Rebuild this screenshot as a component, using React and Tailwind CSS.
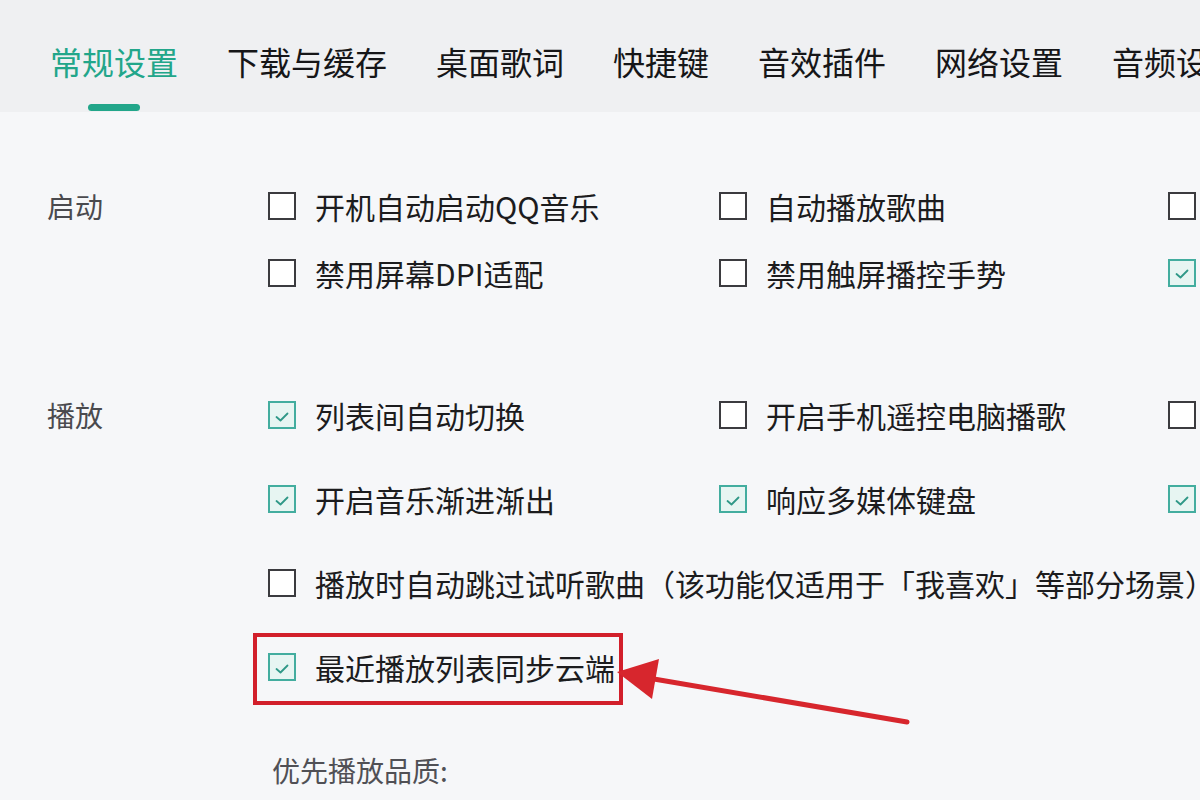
const tabs = ["常规设置", "下载与缓存", "桌面歌词", "快捷键", "音效插件", "网络设置", "音频设置"];

function Check({ on }) {
  if (on) {
    return (
      <span className="flex h-[28px] w-[28px] shrink-0 items-center justify-center border-2 border-[#43ad9f] bg-[#e7f5f2]">
        <svg width="14" height="10" viewBox="0 0 14 10" className="mt-[3px]">
          <path d="M1.5 5 L5.5 8.5 L12.5 1.5" fill="none" stroke="#2f9887" strokeWidth="1.8" strokeLinecap="round" strokeLinejoin="round" />
        </svg>
      </span>
    );
  }
  return <span className="block h-[28px] w-[28px] shrink-0 border-2 border-[#3b3b3f] bg-white" />;
}

function Option({ on, label }) {
  return (
    <div className="flex items-center gap-[19px] whitespace-nowrap">
      <Check on={on} />
      <span className="text-[30px] leading-none text-[#1c1c1e]">{label}</span>
    </div>
  );
}

function Row({ h, cells }) {
  return (
    <div className={`grid grid-cols-[451px_449px_200px] items-center ${h}`}>
      {cells.map((c, i) => (
        <div key={i}>{c && <Option on={c.on} label={c.label} />}</div>
      ))}
    </div>
  );
}

export default function App() {
  return (
    <div
      className="relative h-[800px] w-[1200px] overflow-hidden bg-[#f6f7f9]"
      style={{ fontFamily: '"Noto Sans CJK SC", "Noto Sans", sans-serif' }}
    >
      {/* tabs */}
      <div className="h-[112px] bg-[#eff0f2] pl-[50px]">
        <div className="flex gap-[49px] whitespace-nowrap pt-[42px]">
          {tabs.map((t, i) => (
            <div key={t} className="flex flex-col items-center">
              <span className={`text-[32px] leading-[38px] ${i === 0 ? "text-[#22a68a]" : "text-[#161618]"}`}>{t}</span>
              {i === 0 && <span className="mt-[24px] block h-[7px] w-[52px] rounded-full bg-[#22a68a]" />}
            </div>
          ))}
        </div>
      </div>

      <div className="flex pl-[47px] pt-[60px]">
        <div className="w-[221px] shrink-0">
          <div className="flex h-[67px] items-center text-[28px] text-[#4a4a4e]">启动</div>
        </div>
        <div>
          <Row h="h-[67px]" cells={[{ label: "开机自动启动QQ音乐" }, { label: "自动播放歌曲" }, { label: "" }]} />
          <Row h="h-[67px]" cells={[{ label: "禁用屏幕DPI适配" }, { label: "禁用触屏播控手势" }, { on: true, label: "" }]} />
        </div>
      </div>

      <div className="flex pl-[47px] pt-[67px]">
        <div className="w-[221px] shrink-0">
          <div className="flex h-[84px] items-center text-[28px] text-[#4a4a4e]">播放</div>
        </div>
        <div>
          <Row h="h-[84px]" cells={[{ on: true, label: "列表间自动切换" }, { label: "开启手机遥控电脑播歌" }, { label: "" }]} />
          <Row h="h-[84px]" cells={[{ on: true, label: "开启音乐渐进渐出" }, { on: true, label: "响应多媒体键盘" }, { on: true, label: "" }]} />
          <div className="flex h-[84px] items-center">
            <Option label="播放时自动跳过试听歌曲（该功能仅适用于「我喜欢」等部分场景）" />
          </div>
          <div className="relative flex h-[84px] items-center">
            <Option on label="最近播放列表同步云端" />
            <div className="absolute left-[-15px] top-[8px] h-[72px] w-[370px] border-4 border-[#d21f2b]" />
          </div>
          <div className="pl-[4px] pt-[47px] text-[28px] leading-none text-[#505055]">优先播放品质:</div>
        </div>
      </div>

      {/* annotation arrow */}
      <svg className="pointer-events-none absolute left-0 top-0" width="1200" height="800">
        <line x1="907" y1="722" x2="648" y2="678" stroke="#d7262d" strokeWidth="5" strokeLinecap="round" />
        <polygon points="617,672 659,659 652,699" fill="#d7262d" />
      </svg>
    </div>
  );
}
